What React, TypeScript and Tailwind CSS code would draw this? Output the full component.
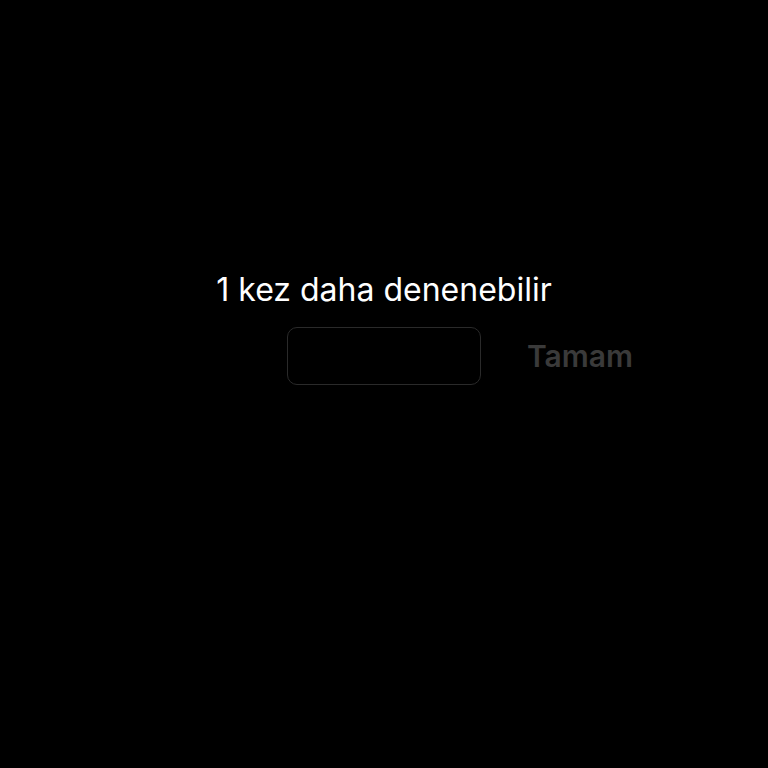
export default function App() {
  return (
    <div
      className="flex h-[768px] w-[768px] flex-col items-center bg-black pt-[269px]"
      style={{ fontFamily: 'Inter, "Noto Sans", sans-serif' }}
    >
      <div className="text-[32px] leading-[42px] text-white">1 kez daha denenebilir</div>

      <div className="mt-[16px] flex items-center gap-[46px]">
        <div className="w-[106px]" />
        <input
          type="password"
          className="h-[58px] w-[194px] rounded-[10px] border border-[#2a2a2a] bg-black px-3 text-white outline-none"
        />
        <button className="w-[106px] text-left text-[30px] font-semibold text-[#3a3a3a]">Tamam</button>
      </div>
    </div>
  );
}
